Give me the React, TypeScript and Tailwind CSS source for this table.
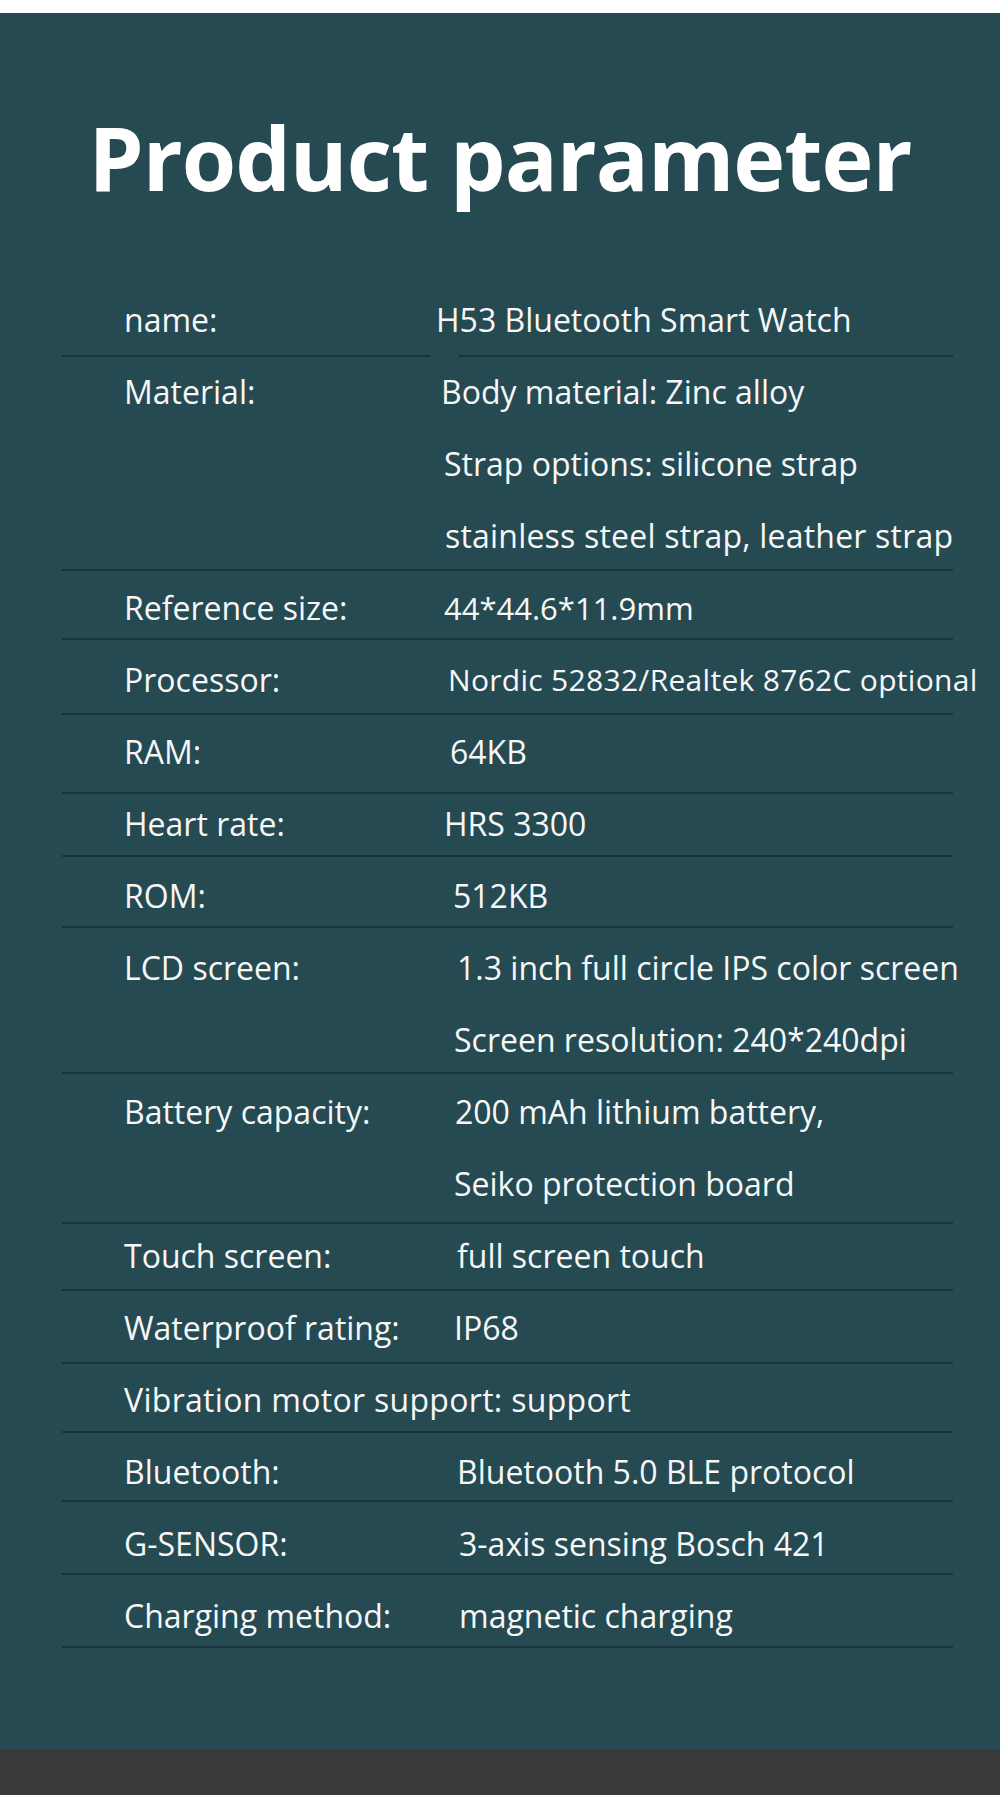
import React from "react";

type Row = {
  label: string;
  values: { text: string; cls: string }[];
  sep: string;
  split?: boolean;
};

const rows: Row[] = [
  { label: "name:", values: [{ text: "H53 Bluetooth Smart Watch", cls: "ml-[-8px]" }], sep: "mt-[-1px] mb-[-1px]", split: true },
  {
    label: "Material:",
    values: [
      { text: "Body material: Zinc alloy", cls: "ml-[-3px]" },
      { text: "Strap options: silicone strap", cls: "ml-[0px]" },
      { text: "stainless steel strap, leather strap", cls: "ml-[1px] tracking-[0.2px]" },
    ],
    sep: "mt-[-3px] mb-[1px]",
  },
  { label: "Reference size:", values: [{ text: "44*44.6*11.9mm", cls: "ml-[0px] text-[31px]" }], sep: "mt-[-6px] mb-[4px]" },
  {
    label: "Processor:",
    values: [{ text: "Nordic 52832/Realtek 8762C optional", cls: "ml-[4px] text-[30px] tracking-[0.3px]" }],
    sep: "mt-[-3px] mb-[1px]",
  },
  { label: "RAM:", values: [{ text: "64KB", cls: "ml-[6px]" }], sep: "mt-[4px] mb-[-6px]" },
  { label: "Heart rate:", values: [{ text: "HRS 3300", cls: "ml-[0px]" }], sep: "mt-[-5px] mb-[3px]" },
  { label: "ROM:", values: [{ text: "512KB", cls: "ml-[9px]" }], sep: "mt-[-6px] mb-[4px]" },
  {
    label: "LCD screen:",
    values: [
      { text: "1.3 inch full circle IPS color screen", cls: "ml-[13px]" },
      { text: "Screen resolution: 240*240dpi", cls: "ml-[10px]" },
    ],
    sep: "mt-[-4px] mb-[2px]",
  },
  {
    label: "Battery capacity:",
    values: [
      { text: "200 mAh lithium battery,", cls: "ml-[11px]" },
      { text: "Seiko protection board", cls: "ml-[10px]" },
    ],
    sep: "mt-[2px] mb-[-4px]",
  },
  { label: "Touch screen:", values: [{ text: "full screen touch", cls: "ml-[13px]" }], sep: "mt-[-3px] mb-[1px]" },
  { label: "Waterproof rating:", values: [{ text: "IP68", cls: "ml-[10px]" }], sep: "mt-[-2px] mb-[0px]" },
  { label: "Vibration motor support: support", values: [], sep: "mt-[-5px] mb-[3px]" },
  { label: "Bluetooth:", values: [{ text: "Bluetooth 5.0 BLE protocol", cls: "ml-[13px]" }], sep: "mt-[-8px] mb-[6px]" },
  { label: "G-SENSOR:", values: [{ text: "3-axis sensing Bosch 421", cls: "ml-[15px]" }], sep: "mt-[-7px] mb-[5px]" },
  { label: "Charging method:", values: [{ text: "magnetic charging", cls: "ml-[15px]" }], sep: "mt-[-6px] mb-[4px]" },
];

export default function App() {
  return (
    <div className="w-[1000px] h-[1795px] bg-white font-['Open_Sans',sans-serif] text-[#f7f7f7] overflow-hidden">
      <div className="h-[13px] bg-white" />

      <section className="bg-[#254a52] pt-[100px] pb-[97px]">
        <h1 className="text-center text-[88px] leading-none font-bold tracking-[-1px] text-white">
          Product parameter
        </h1>

        <div className="mt-[83px] ml-[62px] w-[891px]">
          {rows.map((row, i) => (
            <div key={i}>
              <div className="flex pl-[62px] text-[32px] leading-[72px]">
                <div className={row.values.length ? "w-[320px] shrink-0 whitespace-nowrap" : "whitespace-nowrap tracking-[0.3px]"}>
                  {row.label}
                </div>
                {row.values.length > 0 && (
                  <div className="flex flex-col">
                    {row.values.map((v, j) => (
                      <div key={j} className={`h-[72px] whitespace-nowrap ${v.cls}`}>
                        {v.text}
                      </div>
                    ))}
                  </div>
                )}
              </div>
              {row.split ? (
                <div className={`flex h-[2px] ${row.sep}`}>
                  <div className="w-[369px] bg-[#18333a]" />
                  <div className="ml-[28px] flex-1 bg-[#18333a]" />
                </div>
              ) : (
                <div className={`h-[2px] bg-[#18333a] ${row.sep}`} />
              )}
            </div>
          ))}
        </div>
      </section>

      <div className="h-[46px] bg-[#3a3a3a]" />
    </div>
  );
}
